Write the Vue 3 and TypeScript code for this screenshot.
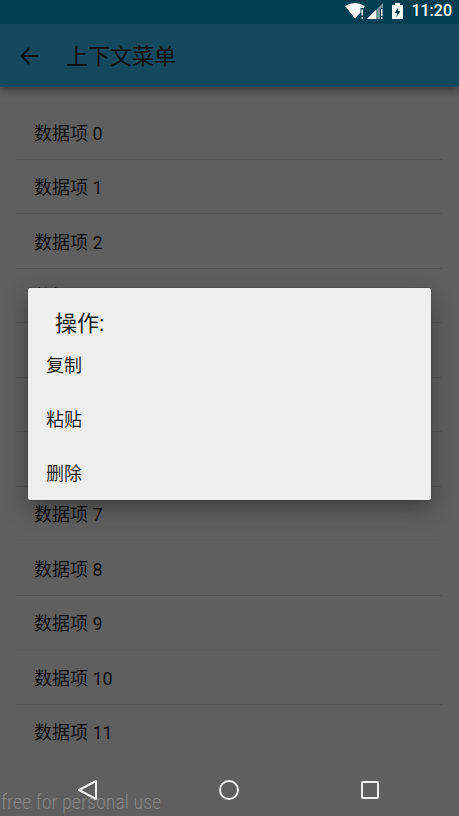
<script setup lang="ts">
import { ref } from 'vue'

const items = ref<string[]>(Array.from({ length: 12 }, (_, i) => `数据项 ${i}`))
const actions: string[] = ['复制', '粘贴', '删除']
</script>

<template>
  <div class="screen">
    <div class="status">
      <svg class="wifi" width="20" height="18" viewBox="0 0 20 18" aria-hidden="true">
        <path d="M0 4Q10 -2 20 4L18.5 6H15.5V10.5L10 16.5Z" fill="#fff" />
        <path d="M16.5 7.5h1.5v6h-1.5zM16.5 15h1.5v1.8h-1.5z" fill="#fff" />
      </svg>
      <svg class="signal" width="17" height="18" viewBox="0 0 17 18" aria-hidden="true">
        <path d="M0 17L16 1V6H13V17Z" fill="#fff" fill-opacity=".45" />
        <path d="M0 17L9 8V17Z" fill="#fff" />
        <path d="M14 7h1.5v7H14zM14 15.2h1.5V17H14z" fill="#fff" />
      </svg>
      <svg class="battery" width="11" height="18" viewBox="0 0 11 18" aria-hidden="true">
        <path d="M3 1h5v2h3v14H0V3h3z" fill="#fff" />
        <path d="M6.5 5L2.5 11H5L4.5 15L8.5 9H6z" fill="#003e52" />
      </svg>
      <time class="clock">11:20</time>
    </div>

    <header class="bar">
      <button class="back" type="button" aria-label="返回">
        <svg width="18" height="18" viewBox="0 0 18 18" fill="none" stroke="currentColor" stroke-width="2">
          <path d="M18 9H2M9.5 1L1.5 9l8 8" />
        </svg>
      </button>
      <h1>上下文菜单</h1>
    </header>

    <ul class="list">
      <li v-for="item in items" :key="item">{{ item }}</li>
    </ul>

    <div class="scrim">
      <section class="dialog" role="dialog" aria-labelledby="dialog-title">
        <h2 id="dialog-title">操作:</h2>
        <button v-for="action in actions" :key="action" class="action" type="button">{{ action }}</button>
      </section>
    </div>

    <span class="watermark">free for personal use</span>

    <nav class="nav">
      <button type="button" aria-label="后退">
        <svg width="24" height="24" viewBox="0 0 24 24" fill="none" stroke="#eee" stroke-width="2" stroke-linejoin="round">
          <path d="M20 3v18L3 12z" />
        </svg>
      </button>
      <button type="button" aria-label="主页">
        <svg width="24" height="24" viewBox="0 0 24 24" fill="none" stroke="#eee" stroke-width="2">
          <circle cx="12" cy="12" r="9" />
        </svg>
      </button>
      <button type="button" aria-label="最近任务">
        <svg width="24" height="24" viewBox="0 0 24 24" fill="none" stroke="#eee" stroke-width="2" stroke-linejoin="round">
          <rect x="4" y="4" width="16" height="16" rx="1" />
        </svg>
      </button>
    </nav>
  </div>
</template>

<style>
body {
  background: #5f5f5f;
}
</style>

<style scoped>
.screen {
  position: relative;
  min-height: 100vh;
  background: #eee;
  color: #1f1f1f;
  font-family: Roboto, "Noto Sans CJK SC", sans-serif;
  overflow: hidden;
}

button {
  padding: 0;
  border: 0;
  background: none;
  color: inherit;
  font: inherit;
}

.status {
  position: relative;
  z-index: 2;
  display: flex;
  align-items: center;
  justify-content: flex-end;
  height: 24px;
  padding: 0 7px 2px 0;
  box-sizing: border-box;
  background: #003e52;
  color: #fff;
}

.signal {
  margin-left: 2px;
}

.battery {
  margin-left: 8px;
}

.clock {
  margin-left: 8px;
  font-size: 16px;
  font-weight: 500;
  line-height: 22px;
}

.bar {
  position: relative;
  display: flex;
  align-items: center;
  height: 63px;
  padding: 0 20px;
  background: #34b6e8;
  box-shadow: 0 3px 8px rgba(0, 0, 0, 0.45);
}

.back {
  display: flex;
  margin-right: 28px;
}

h1,
h2 {
  margin: 0;
  font-size: 22px;
  font-weight: 400;
}

h1 {
  padding-top: 2px;
  line-height: 32px;
}

.list {
  display: grid;
  grid-auto-rows: 55px 54px;
  margin: 0;
  padding: 18px 17px 57px 16px;
  list-style: none;
  font-size: 18px;
  line-height: 26px;
}

.list li {
  display: flex;
  align-items: center;
  padding: 3px 0 0 18px;
  border-bottom: 1px solid #cfcfcf;
}

.list li:nth-child(even) {
  border-color: #d8d8d8;
}

.list li:nth-child(8),
.list li:nth-child(10) {
  border-color: #e6e6e6;
}

.list li:last-child {
  border-color: transparent;
}

.scrim {
  position: absolute;
  inset: 0;
  z-index: 1;
  display: flex;
  align-items: center;
  padding: 24px 28px 52px;
  background: rgba(0, 0, 0, 0.6);
}

.dialog {
  flex: 1;
  display: flex;
  flex-direction: column;
  padding-top: 18px;
  border-radius: 2px;
  background: #eee;
  box-shadow: 0 0 1px 1px rgba(0, 0, 0, 0.1), 0 8px 22px rgba(0, 0, 0, 0.35);
}

.dialog h2 {
  padding: 4px 0 0 27px;
  line-height: 28px;
}

.action {
  height: 54px;
  padding: 0 0 2px 18px;
  font-size: 18px;
  text-align: left;
}

.watermark {
  position: absolute;
  bottom: 2px;
  left: 1px;
  z-index: 2;
  color: #868686;
  font-family: "Roboto Condensed", Roboto, sans-serif;
  font-size: 20px;
  font-weight: 300;
  line-height: 24px;
}

.nav {
  position: absolute;
  right: 19px;
  bottom: 0;
  left: 17px;
  z-index: 3;
  display: grid;
  grid-template-columns: repeat(3, 1fr);
  height: 52px;
}

.nav button {
  display: flex;
  align-items: center;
  justify-content: center;
}
</style>
